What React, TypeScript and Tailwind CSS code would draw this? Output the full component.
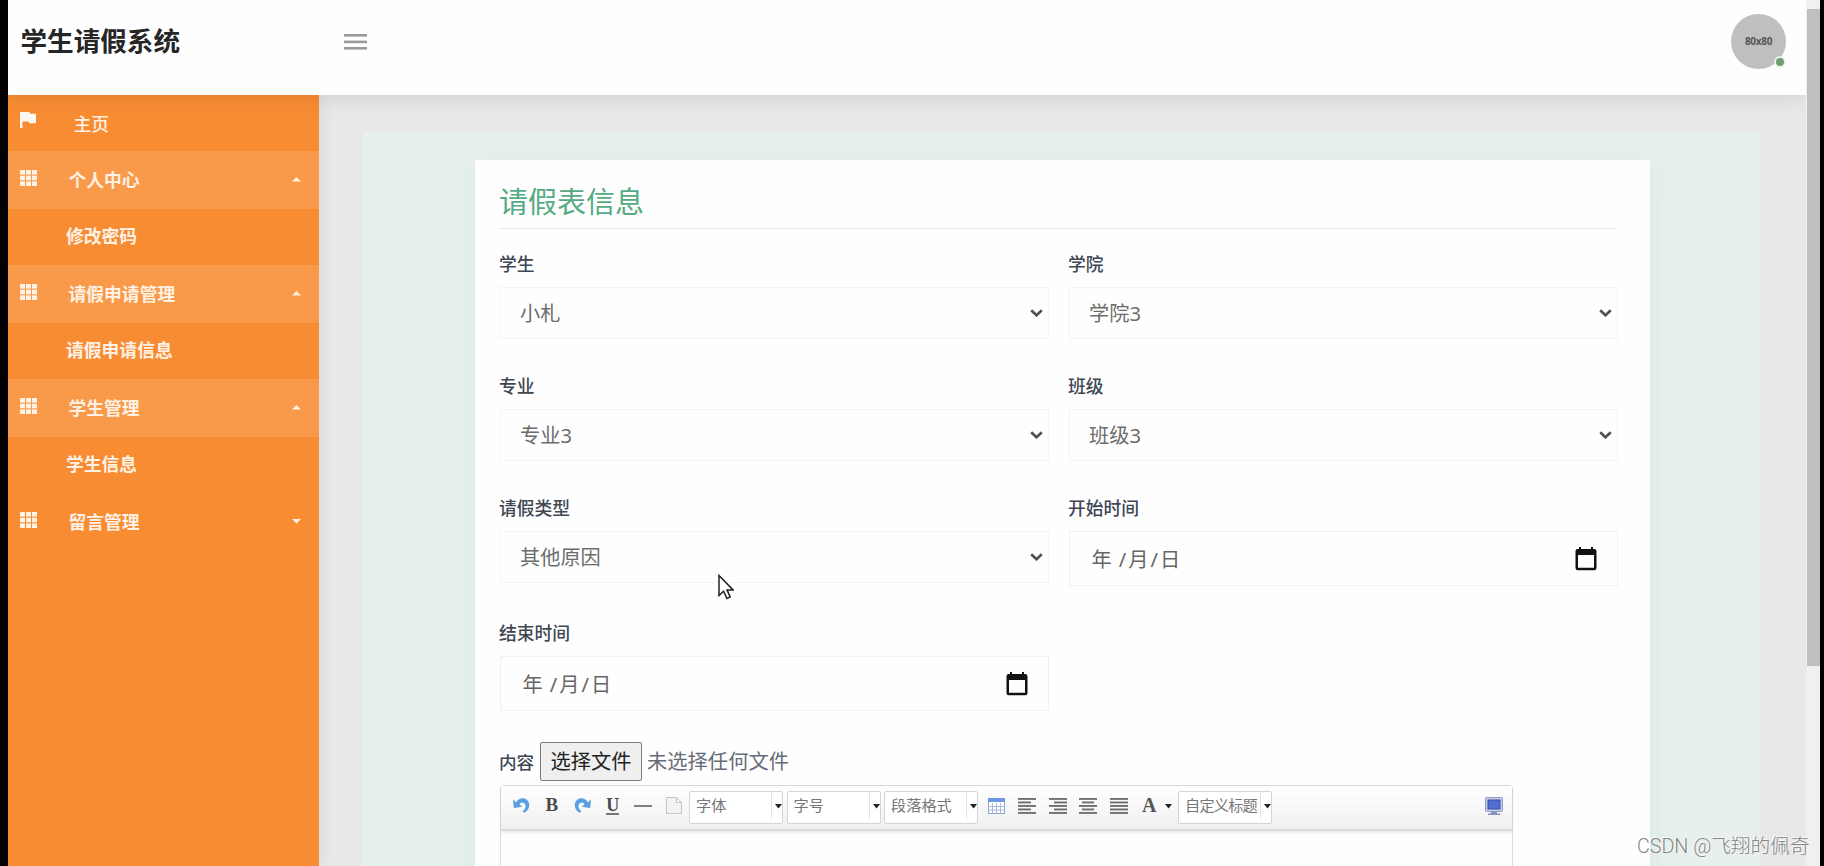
import type { ReactNode } from "react";

const menu = [
  { title: "个人中心", open: true, children: ["修改密码"] },
  { title: "请假申请管理", open: true, children: ["请假申请信息"] },
  { title: "学生管理", open: true, children: ["学生信息"] },
  { title: "留言管理", open: false, children: [] },
];

const GridIcon = () => (
  <svg className="w-[17px] h-4 relative -top-0.5" viewBox="0 0 17 16" fill="#fff3e6">
    {[0, 6, 12].map((x) =>
      [0, 5.7, 11.4].map((y) => (
        <rect key={`${x}-${y}`} x={x} y={y} width="5" height="4.6" />
      ))
    )}
  </svg>
);

const Sidebar = () => (
  <nav className="w-[310.5px] shrink-0 bg-[#f88c33] text-[#fff1e4] text-[17.8px] shadow-[2px_0_14px_rgba(0,0,0,0.07)] z-10">
    <div className="h-[56.5px] flex items-center pl-3 pt-[3px]">
      <svg className="w-4 h-4 relative -top-1" viewBox="0 0 16 16" fill="#fff8f0">
        <path d="M0 0h9.5l.6 1.8H16v9.4H9.2l-.7-1.8H2.4V16H0z" />
      </svg>
      <span className="ml-[37.5px] font-medium">主页</span>
    </div>
    {menu.map((item) => (
      <div key={item.title}>
        <div
          className={`h-[57.5px] flex items-center pl-3 pr-[17.5px] ${
            item.open ? "bg-[#f9994a]" : ""
          }`}
        >
          <GridIcon />
          <span className="ml-[31.5px] flex-1 font-bold pt-0.5">{item.title}</span>
          <svg className="w-[9px] h-[5px]" viewBox="0 0 9 5" fill="#fff1e4">
            <path d={item.open ? "M0 4.5 4.5 0 9 4.5z" : "M0 0h9L4.5 4.5z"} />
          </svg>
        </div>
        {item.children.map((child) => (
          <div key={child} className="h-[56.5px] flex items-center pl-[58px] font-bold">
            {child}
          </div>
        ))}
      </div>
    ))}
  </nav>
);

const Header = () => (
  <header className="h-[94.5px] shrink-0 bg-[#fefefe] flex items-start pl-[12.5px] pr-5 relative z-20 shadow-[0_4px_18px_rgba(0,0,0,0.09)]">
    <h1 className="w-[323px] h-[83px] flex items-center text-[26.6px] font-bold text-[#262626]">
      学生请假系统
    </h1>
    <svg className="w-[23px] h-4 mt-[33.5px]" viewBox="0 0 23 16" fill="#999">
      <rect y="0" width="23" height="2.6" />
      <rect y="6.6" width="23" height="2.6" />
      <rect y="13" width="23" height="2.6" />
    </svg>
    <div className="ml-auto mt-[14px] w-[55px] h-[55px] rounded-full bg-[#bfbfbf] flex items-center justify-center relative">
      <span className="text-[10px] tracking-[-0.3px] font-bold text-[#555]">80x80</span>
      <span className="absolute left-[43px] top-[42px] w-3 h-3 rounded-full border-2 border-[#eef3ee] bg-[#6f9c70]" />
    </div>
  </header>
);

const Field = ({ label, children }: { label: string; children: ReactNode }) => (
  <div>
    <div className="h-6 mb-[11px] flex items-center text-[17.8px] font-medium text-[#3f4753]">
      {label}
    </div>
    {children}
  </div>
);

const SelectBox = ({ value }: { value: string }) => (
  <div className="h-[52px] ml-px -mr-px border border-[#f3f5f5] flex items-center justify-between pl-[19px] pr-[5px] text-[20.2px] text-[#6c6c6c]">
    <span className="pt-px">{value}</span>
    <svg className="w-[13px] h-2" viewBox="0 0 13 8" fill="none" stroke="#505050" strokeWidth="2.6">
      <path d="M1.2 1.2 6.5 6.3 11.8 1.2" />
    </svg>
  </div>
);

const DateBox = () => (
  <div className="h-[55px] ml-px -mr-px border border-[#f0f2f2] flex items-center justify-between pl-[21.5px] pr-5 text-[20.2px] text-[#666]">
    <span className="flex pt-px">
      <span>年</span>
      <span className="ml-[7px] tracking-[2px]">/月/日</span>
    </span>
    <svg className="w-[22px] h-6 mt-px" viewBox="0 0 22 24">
      <path d="M4 0h2v2h10V0h2v2h1.3A2.2 2.2 0 0 1 21.5 4.2V21a2.2 2.2 0 0 1-2.2 2.2H2.7A2.2 2.2 0 0 1 .5 21V4.2A2.2 2.2 0 0 1 2.7 2H4zM3 8v12.7h16V8z" fill="#111" fillRule="evenodd" />
    </svg>
  </div>
);

const Arrow = ({ className }: { className: string }) => (
  <svg className={`w-[7px] h-[5px] shrink-0 ${className}`} viewBox="0 0 7 5" fill="#222">
    <path d="M0 0h7L3.5 4.5z" />
  </svg>
);

const Combo = ({ text, tight = false }: { text: string; tight?: boolean }) => (
  <div className="w-[94px] h-[33px] shrink-0 mr-[3.5px] bg-white border border-[#d4d4d4] rounded-xs flex items-start">
    <span
      className={`w-[82px] h-[27px] pl-1.5 leading-[27px] text-[15.2px] text-[#777] border-r border-[#e2e2e2] whitespace-nowrap ${
        tight ? "tracking-[-0.8px]" : ""
      }`}
    >
      {text}
    </span>
    <Arrow className="mt-[12px] ml-[3px]" />
  </div>
);

const ToolIcon = ({ children }: { children: ReactNode }) => (
  <span className="w-[30.5px] h-[29px] shrink-0 flex items-center justify-center">{children}</span>
);

// each row: [x, width]
const alignRows = {
  left: [[0, 18], [0, 13], [0, 18], [0, 13], [0, 18]],
  right: [[0, 18], [5, 13], [0, 18], [5, 13], [0, 18]],
  center: [[0, 18], [3, 12], [0, 18], [3, 12], [0, 18]],
  full: [[0, 18], [0, 18], [0, 18], [0, 18], [0, 18]],
};

const AlignIcon = ({ type }: { type: keyof typeof alignRows }) => (
  <ToolIcon>
    <svg className="w-[18px] h-4" viewBox="0 0 18 16" fill="#707070">
      {alignRows[type].map(([x, w], i) => (
        <rect key={i} x={x} y={i * 3.5} width={w} height="1.9" />
      ))}
    </svg>
  </ToolIcon>
);

const UndoIcon = ({ flip = false }: { flip?: boolean }) => (
  <ToolIcon>
    <svg className={`w-[17px] h-[17px] ${flip ? "-scale-x-100" : ""}`} viewBox="0 0 17 17">
      <path
        d="M0 2.5 3 5.2C6 .8 11 .1 14.2 3.2c3.5 3.6 2.5 9.4-2.8 12.6l-2-1c3.3-3 4.200-6.400 2-8.400-1.700-1.500-3.700-.9-4.900 1l3 2.400L.8 11z"
        fill="#5b9fe3"
      />
    </svg>
  </ToolIcon>
);

const Editor = () => (
  <div className="ml-px mt-[4px] w-[1013px] h-40 border border-[#dedede] rounded-sm">
    <div className="h-[45px] flex items-start pt-[5px] pl-[5px] pr-[3px] bg-linear-to-b from-white to-[#f0f0f0] border-b-2 border-[#dcdcdc] shadow-[0_1px_3px_rgba(0,0,0,0.12)]">
      <UndoIcon />
      <ToolIcon>
        <b className="font-['Liberation_Serif',serif] text-[19px] text-[#4a4a4a]">B</b>
      </ToolIcon>
      <UndoIcon flip />
      <ToolIcon>
        <b className="font-['Liberation_Serif',serif] text-[18px] leading-[16px] text-[#4a4a4a] border-b-2 border-[#777]">
          U
        </b>
      </ToolIcon>
      <ToolIcon>
        <span className="w-[18px] h-0.5 bg-[#808080]" />
      </ToolIcon>
      <ToolIcon>
        <svg className="w-4 h-[17px]" viewBox="0 0 16 17" fill="#f3f3f3" stroke="#c4c4c4">
          <path d="M.5.5h10l5 5v11H.5zM10.5.5v5h5" />
        </svg>
      </ToolIcon>
      <Combo text="字体" />
      <Combo text="字号" />
      <Combo text="段落格式" />
      <ToolIcon>
        <svg className="w-[17px] h-4" viewBox="0 0 17 16">
          <rect x=".5" y=".5" width="16" height="15" fill="#fff" stroke="#8aa3d3" />
          <rect width="17" height="4" fill="#6f97e6" />
          <path d="M0 8.5h17M0 12h17M4.5 5v11M8.5 5v11M12.5 5v11" stroke="#a9b8dc" />
        </svg>
      </ToolIcon>
      <AlignIcon type="left" />
      <AlignIcon type="right" />
      <AlignIcon type="center" />
      <AlignIcon type="full" />
      <ToolIcon>
        <b className="font-['Liberation_Serif',serif] text-[20px] leading-5 text-[#555] pb-0.5">A</b>
      </ToolIcon>
      <Arrow className="mt-[13px] mr-[6.5px]" />
      <Combo text="自定义标题" tight />
      <span className="ml-auto">
        <ToolIcon>
          <svg className="w-[18px] h-[18px]" viewBox="0 0 18 18">
            <rect x=".5" y=".5" width="17" height="14" rx="1" fill="#c5cce6" stroke="#8f9bc5" />
            <rect x="3" y="3" width="12" height="9" fill="#4f6fd6" stroke="#3a4fa0" />
            <path d="M6 15h6v1.5h3V18H3v-1.5h3z" fill="#8791b5" />
          </svg>
        </ToolIcon>
      </span>
    </div>
  </div>
);

const LeaveForm = () => (
  <div className="mt-[26.5px] ml-[112.5px] w-[1175px] h-[800px] bg-[#fefefe] pl-6 pr-[33px] shadow-[0_8px_24px_rgba(190,220,230,0.35)]">
    <h2 className="h-[69px] pt-4 flex items-center border-b border-[#ececec] text-[29px] leading-none text-[#56ab83]">
      请假表信息
    </h2>
    <div className="mt-[23.5px] grid grid-cols-2 gap-x-5 gap-y-[35px]">
      <Field label="学生"><SelectBox value="小札" /></Field>
      <Field label="学院"><SelectBox value="学院3" /></Field>
      <Field label="专业"><SelectBox value="专业3" /></Field>
      <Field label="班级"><SelectBox value="班级3" /></Field>
      <Field label="请假类型"><SelectBox value="其他原因" /></Field>
      <Field label="开始时间"><DateBox /></Field>
      <Field label="结束时间"><DateBox /></Field>
    </div>
    <div className="mt-[31px] flex items-center text-[20.3px]">
      <span className="w-[41px] pt-0.5 text-[17.6px] font-medium text-[#3f4753]">内容</span>
      <span className="w-[102px] h-[39px] flex items-center justify-center bg-[#efefef] border-[1.5px] border-[#7d7d7d] rounded-xs text-[#222]">
        选择文件
      </span>
      <span className="ml-[5px] text-[#666c76]">未选择任何文件</span>
    </div>
    <Editor />
  </div>
);

export default function App() {
  return (
    <div className="relative w-[1824px] h-[866px] overflow-hidden bg-black pl-2 pr-1 flex font-['Noto_Sans','Noto_Sans_CJK_SC',sans-serif]">
      <div className="w-[1798px] flex flex-col bg-[#e8e8e8] overflow-hidden">
        <Header />
        <div className="flex flex-1 min-h-0">
          <Sidebar />
          <main className="flex-1 pt-[38.5px] pl-11 pr-[46px] overflow-hidden">
            <div className="h-[900px] bg-[#e7f0ed] flow-root">
              <LeaveForm />
            </div>
          </main>
        </div>
      </div>
      {/* scrollbar */}
      <div className="w-[14px] bg-[#f0f0f0] pt-[9px] pl-px">
        <div className="h-[657px] bg-[#bfbfbf]" />
      </div>

      {/* mouse pointer */}
      <svg className="absolute left-[718px] top-[574px] w-4 h-[26px] z-30" viewBox="0 0 16 26" fill="#fff" stroke="#222" strokeWidth="1.5">
        <path d="M1 1.5v20l4.6-4.3 3.3 7.3 3.3-1.5-3.2-7.1H15z" />
      </svg>

      <div className="absolute left-[1637px] top-[832px] z-30 text-[19.7px] leading-[30px] whitespace-nowrap font-light text-[#858585] font-['Roboto','Noto_Sans_CJK_SC',sans-serif] [text-shadow:-1px_-1px_0_rgba(255,255,255,0.8)]">
        CSDN @飞翔的佩奇
      </div>
    </div>
  );
}
